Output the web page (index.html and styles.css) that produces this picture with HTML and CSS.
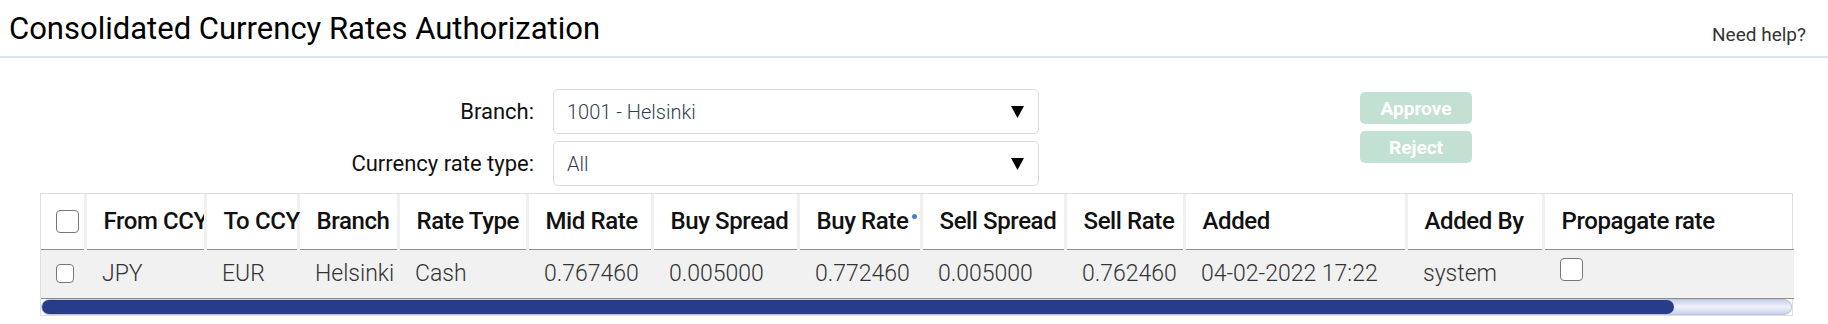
FILE: index.html
```html
<!DOCTYPE html>
<html lang="en">
<head>
  <meta charset="UTF-8">
  <title>Consolidated Currency Rates Authorization</title>
  <link rel="stylesheet" href="styles.css">
</head>
<body>

<header class="page-header">
  <h1>Consolidated Currency Rates Authorization</h1>
  <a class="help" href="#">Need help?</a>
</header>

<div class="toolbar">
  <div class="filters">
    <label class="filter-label">Branch:</label>
    <div class="select">
      <span>1001 - Helsinki</span>
      <svg width="13" height="12" viewBox="0 0 13 12"><polygon points="0,0 13,0 6.5,12" fill="#000"/></svg>
    </div>
    <label class="filter-label">Currency rate type:</label>
    <div class="select">
      <span>All</span>
      <svg width="13" height="12" viewBox="0 0 13 12"><polygon points="0,0 13,0 6.5,12" fill="#000"/></svg>
    </div>
  </div>
  <div class="actions">
    <button class="btn" disabled>Approve</button>
    <button class="btn" disabled>Reject</button>
  </div>
</div>

<div class="grid-wrap">
  <table class="grid">
    <colgroup>
      <col style="width:44px"><col style="width:120px"><col style="width:93px"><col style="width:100px">
      <col style="width:129px"><col style="width:125px"><col style="width:146px"><col style="width:123px">
      <col style="width:144px"><col style="width:119px"><col style="width:222px"><col style="width:137px">
      <col style="width:251px">
    </colgroup>
    <thead>
      <tr>
        <th class="cb-cell"><span class="cb cb-lg"></span></th>
        <th class="clip">From CCY</th>
        <th>To CCY</th>
        <th>Branch</th>
        <th>Rate Type</th>
        <th>Mid Rate</th>
        <th>Buy Spread</th>
        <th>Buy Rate<span class="sort-dot"></span></th>
        <th>Sell Spread</th>
        <th>Sell Rate</th>
        <th>Added</th>
        <th>Added By</th>
        <th>Propagate rate</th>
      </tr>
    </thead>
    <tbody>
      <tr>
        <td class="cb-cell"><span class="cb"></span></td>
        <td>JPY</td>
        <td>EUR</td>
        <td>Helsinki</td>
        <td>Cash</td>
        <td>0.767460</td>
        <td>0.005000</td>
        <td>0.772460</td>
        <td>0.005000</td>
        <td>0.762460</td>
        <td>04-02-2022 17:22</td>
        <td>system</td>
        <td class="top"><span class="cb cb-lg"></span></td>
      </tr>
    </tbody>
  </table>
  <div class="hscroll">
    <div class="hscroll-thumb" style="width:93.3%"></div>
  </div>
</div>

</body>
</html>
```

FILE: styles.css
```css
* { margin: 0; padding: 0; box-sizing: border-box; }
body {
  font-family: Roboto, 'Liberation Sans', sans-serif;
  background: #fff;
  color: #111;
  width: 1828px;
}

.page-header {
  display: flex;
  justify-content: space-between;
  align-items: flex-end;
  height: 58px;
  padding: 0 22px 8px 9px;
  border-bottom: 2px solid #d7e4f8;
}

h1 {
  font-size: 31px;
  font-weight: 400;
  line-height: 38px;
  color: #000;
}

.help {
  font-size: 19px;
  color: #333;
  text-decoration: none;
  line-height: 26px;
}

.toolbar {
  display: flex;
  align-items: flex-start;
  margin-top: 31px;
}

.filters {
  display: grid;
  grid-template-columns: 534px 486px;
  column-gap: 19px;
  row-gap: 7px;
}

.filter-label {
  font-size: 22px;
  font-weight: 400;
  text-align: right;
  align-self: center;
  color: #111;
}

.select {
  height: 45px;
  border: 1px solid #dcdcdc;
  border-radius: 5px;
  background: #fff;
  display: flex;
  align-items: center;
  justify-content: space-between;
  padding: 0 14px 0 13px;
  font-size: 20px;
  font-weight: 300;
  color: #2e3d50;
}

.actions {
  display: flex;
  flex-direction: column;
  gap: 7px;
  margin-left: 321px;
  margin-top: 3px;
}

.btn {
  width: 112px;
  height: 32px;
  border: none;
  border-radius: 5px;
  background: #c3e1d3;
  color: #fff;
  font-family: inherit;
  font-size: 19px;
  font-weight: 700;
}

.grid-wrap {
  margin: 7px 0 0 40px;
  width: 1753px;
  border: 1px solid #dedede;
}

.grid {
  border-collapse: collapse;
  table-layout: fixed;
  width: 1751px;
}

.grid th {
  height: 55px;
  padding: 0 0 0 17px;
  text-align: left;
  font-size: 24px;
  font-weight: 500;
  letter-spacing: -0.4px;
  color: #111;
  white-space: nowrap;
  border-left: 3px solid #f0f0f0;
  border-bottom: 1px solid #8e8e8e;
  position: relative;
}

.grid th:first-child { border-left: none; }
.grid th.clip { overflow: hidden; text-overflow: clip; }

.grid td {
  height: 49px;
  padding: 0 4px 0 17px;
  background: #f1f1f1;
  font-size: 23px;
  font-weight: 300;
  color: #333;
  white-space: nowrap;
  border-bottom: 1px solid #8e8e8e;
}

.grid .cb-cell { padding: 0 0 0 15px; }
.grid td.top { vertical-align: top; padding-top: 8px; }

.cb {
  display: block;
  width: 18px;
  height: 19px;
  border: 1px solid #777;
  border-radius: 4px;
  background: #fff;
}

.cb-lg { width: 23px; height: 23px; }

.sort-dot {
  position: absolute;
  top: 20px;
  right: 3px;
  width: 5px;
  height: 5px;
  border-radius: 50%;
  background: #4a7fc0;
}

.hscroll {
  height: 16px;
  border-radius: 8px;
  background: linear-gradient(to bottom, #c7d2ea, #eef2fa 50%, #c7d2ea);
  border: 1px solid #b9c4de;
}

.hscroll-thumb {
  height: 100%;
  border-radius: 8px;
  background: #283c8a;
}
```
